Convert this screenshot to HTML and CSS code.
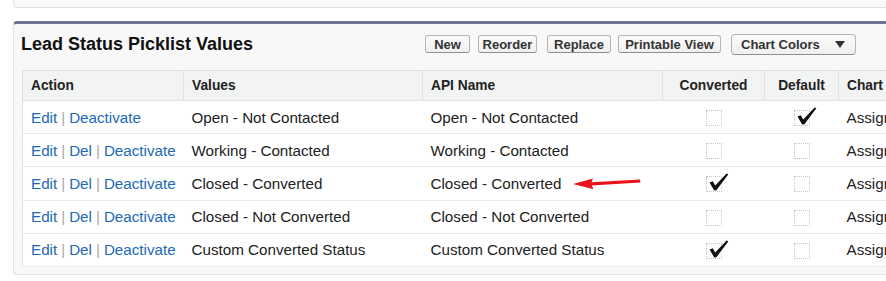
FILE: index.html
```html
<!DOCTYPE html>
<html lang="en">
  <head>
    <meta charset="UTF-8" />
    <title>Lead Status Picklist Values</title>
    <link rel="stylesheet" href="styles.css">
  </head>
  <body>
    <div class="top-card"></div>
    <div class="block">
      <div class="block-head">
        <h2 class="block-title">Lead Status Picklist Values</h2>
        <div class="buttons">
          <button class="btn btn-new">New</button>
          <button class="btn btn-reorder">Reorder</button>
          <button class="btn btn-replace">Replace</button>
          <button class="btn btn-print">Printable View</button>
          <button class="btn btn-menu">Chart Colors <span class="caret"></span></button>
        </div>
      </div>
      <table class="list">
        <colgroup>
          <col class="c-action" />
          <col class="c-values" />
          <col class="c-api" />
          <col class="c-conv" />
          <col class="c-def" />
          <col class="c-chart" />
        </colgroup>
        <thead>
          <tr>
            <th>Action</th>
            <th>Values</th>
            <th>API Name</th>
            <th class="center">Converted</th>
            <th class="center">Default</th>
            <th>Chart Colors</th>
          </tr>
        </thead>
        <tbody>
          <tr>
            <td><a href="#">Edit</a><span class="sep">|</span><a href="#">Deactivate</a></td>
            <td>Open - Not Contacted</td>
            <td>Open - Not Contacted</td>
            <td class="center"><span class="cb"></span></td>
            <td class="center"><span class="cb checked"></span></td>
            <td>Assigned dynamically</td>
          </tr>
          <tr>
            <td><a href="#">Edit</a><span class="sep">|</span><a href="#">Del</a><span class="sep">|</span><a href="#">Deactivate</a></td>
            <td>Working - Contacted</td>
            <td>Working - Contacted</td>
            <td class="center"><span class="cb"></span></td>
            <td class="center"><span class="cb"></span></td>
            <td>Assigned dynamically</td>
          </tr>
          <tr>
            <td><a href="#">Edit</a><span class="sep">|</span><a href="#">Del</a><span class="sep">|</span><a href="#">Deactivate</a></td>
            <td>Closed - Converted</td>
            <td class="marked">Closed - Converted<span class="arrow"></span></td>
            <td class="center"><span class="cb checked"></span></td>
            <td class="center"><span class="cb"></span></td>
            <td>Assigned dynamically</td>
          </tr>
          <tr>
            <td><a href="#">Edit</a><span class="sep">|</span><a href="#">Del</a><span class="sep">|</span><a href="#">Deactivate</a></td>
            <td>Closed - Not Converted</td>
            <td>Closed - Not Converted</td>
            <td class="center"><span class="cb"></span></td>
            <td class="center"><span class="cb"></span></td>
            <td>Assigned dynamically</td>
          </tr>
          <tr>
            <td><a href="#">Edit</a><span class="sep">|</span><a href="#">Del</a><span class="sep">|</span><a href="#">Deactivate</a></td>
            <td>Custom Converted Status</td>
            <td>Custom Converted Status</td>
            <td class="center"><span class="cb checked"></span></td>
            <td class="center"><span class="cb"></span></td>
            <td>Assigned dynamically</td>
          </tr>
        </tbody>
      </table>
    </div>
  </body>
</html>
```

FILE: styles.css
```css
* {
  margin: 0;
  padding: 0;
  box-sizing: border-box;
}
body {
  background: #fff;
  font-family: "Liberation Sans", Arial, sans-serif;
  color: #222;
  overflow: hidden;
  width: 886px;
  height: 281px;
}
.top-card {
  margin-left: 13px;
  width: 960px;
  height: 8px;
  background: #f8f8f8;
  border: 1px solid #e2e2e2;
  border-top: none;
  border-radius: 0 0 4px 4px;
}
.block {
  margin-top: 13px;
  margin-left: 13px;
  width: 960px;
  background: #f8f8f8;
  border: 1px solid #e2e2e2;
  border-top: 3px solid #6c7796;
  border-radius: 4px;
  padding: 0 8px 7px 8px;
}
.block-head {
  display: flex;
  align-items: center;
  height: 40px;
  margin-bottom: 6px;
}
.block-title {
  flex: 0 0 404px;
  font-size: 18px;
  font-weight: bold;
  color: #111;
  margin-left: -1px;
}
.buttons {
  display: flex;
  align-items: center;
  gap: 8px;
}
.btn {
  height: 18px;
  padding: 0;
  font-family: "Liberation Sans", Arial, sans-serif;
  font-size: 13px;
  font-weight: bold;
  color: #333;
  background: linear-gradient(#fbfbfb, #efefef);
  border: 1px solid #b5b5b5;
  border-bottom-color: #8f8f8f;
  border-radius: 3px;
}
.btn-new { width: 45px; }
.btn-reorder { width: 59px; }
.btn-replace { width: 64px; margin-left: 2px; }
.btn-print { width: 103px; margin-left: -1px; }
.btn-menu {
  width: 125px;
  height: 21px;
  margin-left: 2px;
  padding: 0 10px 0 9px;
  border-radius: 4px;
  display: flex;
  align-items: center;
  justify-content: space-between;
}
.caret {
  width: 0;
  height: 0;
  border-left: 5px solid transparent;
  border-right: 5px solid transparent;
  border-top: 7px solid #333;
}

.list {
  table-layout: fixed;
  border-collapse: collapse;
  background: #fff;
  border: 1px solid #e0e0e0;
  width: 936px;
}
.c-action { width: 161px; }
.c-values { width: 239px; }
.c-api { width: 240px; }
.c-conv { width: 102px; }
.c-def { width: 74px; }
.c-chart { width: 120px; }
.list th {
  height: 30px;
  background: #f2f3f3;
  font-size: 13.75px;
  font-weight: bold;
  color: #222;
  text-align: left;
  padding: 0 8px;
  border-left: 1px solid #e0e0e0;
  border-bottom: 1px solid #e0e0e0;
  white-space: nowrap;
  overflow: hidden;
}
.list td {
  height: 33.2px;
  font-size: 15.2px;
  padding: 0 8px;
  border-bottom: 1px solid #ebebeb;
  white-space: nowrap;
  overflow: hidden;
}
.list .center {
  text-align: center;
}
.list a {
  color: #1b6ab5;
  text-decoration: none;
}
.sep {
  color: #a8a8a8;
  margin: 0 4px;
}
.cb {
  display: inline-block;
  position: relative;
  width: 16px;
  height: 16px;
  vertical-align: middle;
  border: 1px dotted #c6c6c6;
}
.cb.checked::after {
  content: "";
  position: absolute;
  left: 2px;
  top: -4px;
  width: 20px;
  height: 18px;
  background: url("data:image/svg+xml;utf8,<svg xmlns='http://www.w3.org/2000/svg' viewBox='0 0 20 18'><path d='M0.5 9.5 L3.8 8.2 L6.2 12.4 L17.6 0.4 L19.4 1.2 L7.4 17.2 L5.2 17.4 Z' fill='%23111'/></svg>") no-repeat;
}
.marked {
  position: relative;
  overflow: visible;
}
.arrow {
  position: absolute;
  left: 150px;
  top: 10px;
  width: 68px;
  height: 12px;
  background: url("data:image/svg+xml;utf8,<svg xmlns='http://www.w3.org/2000/svg' viewBox='0 0 68 12'><path d='M0 7 L20 1.5 L18.5 5.2 L67 2.4 L67.4 5.4 L18.8 8.4 L20.5 12.2 Z' fill='%23e8141b'/></svg>") no-repeat;
}
```
